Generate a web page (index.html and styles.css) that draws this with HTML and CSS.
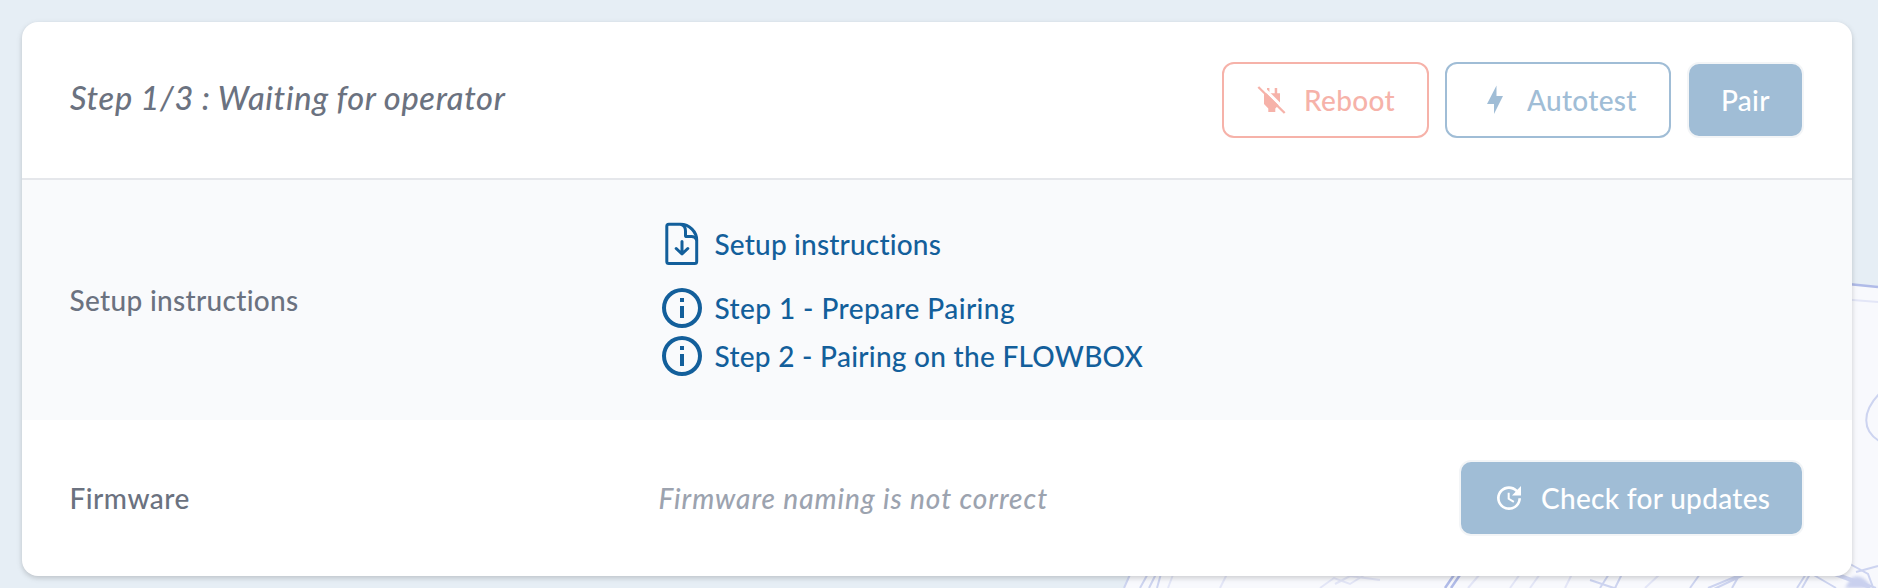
FILE: index.html
```html
<!DOCTYPE html>
<html lang="en">
<head>
<meta charset="utf-8">
<title>Device setup</title>
<link rel="stylesheet" href="styles.css">
</head>
<body>
<svg class="backdrop" width="1878" height="588" viewBox="0 0 1878 588" aria-hidden="true">
  <path class="paper" d="M1124 588 L1136 560 H1838 V283 L1878 286 V588Z"/>
  <g class="sketch">
    <path class="strong" d="M1838 283 L1878 287"/>
    <path d="M1840 299 L1878 302"/>
    <path class="mid" d="M1879 394 C1862 412 1862 430 1879 441"/>
    <path class="mid" d="M1124 588 L1132 570 M1149 588 L1158 570 M1140 588 L1150 570 M1157 588 L1162 570"/>
    <path d="M1168 588 L1174 572 M1220 588 L1228 572 M1320 588 L1334 578 L1350 584 L1366 574 M1335 584 L1350 576 L1380 580"/>
    <path class="strong" d="M1451 588 L1462 572 M1445 588 L1456 572"/>
    <path d="M1468 588 L1480 574 M1510 588 L1520 574 M1530 588 L1540 574 M1565 588 L1572 574 M1645 588 L1660 574"/>
    <path class="mid" d="M1600 588 L1609 574 M1615 588 L1622 574 M1590 580 L1620 590 M1690 588 L1700 574 M1708 588 L1742 574 M1712 590 L1750 572 M1732 588 L1740 574"/>
    <path class="mid" d="M1797 588 L1806 574 M1802 588 L1810 574 M1812 574 L1836 588 M1832 574 L1870 588 M1838 574 L1876 588 M1850 564 L1868 574 L1874 590 M1856 572 L1878 566"/>
  </g>
  <path class="smudge" d="M1845 588 L1851 578 Q1862 572 1872 588Z"/>
</svg>
<main class="card">
  <header class="card-header">
    <h1 class="title">Step 1/3 : Waiting for operator</h1>
    <div class="actions">
      <button class="btn outline danger">
        <svg width="32" height="32" viewBox="0 0 32 32"><path d="M11 4h2.400v5.300h5.300V4h2.500v5.300H24V20l-4.700 4.500V28h-7v-3.500L8 20V9.300h3z" fill="currentColor"/><path d="M4 .7L31 27.500" stroke="#fff" stroke-width="3"/><path d="M2.300 3L28.700 29" stroke="currentColor" stroke-width="2.300"/></svg>
        <span>Reboot</span>
      </button>
      <button class="btn outline primary">
        <svg width="32" height="32" viewBox="0 0 32 32"><path d="M17.500 1.500V12H24L15 30V20H8z" fill="currentColor"/></svg>
        <span>Autotest</span>
      </button>
      <button class="btn solid"><span>Pair</span></button>
    </div>
  </header>
  <section class="row shaded">
    <div class="label">Setup instructions</div>
    <div class="links">
      <a class="link file"><svg width="48" height="48" viewBox="0 0 48 48" fill="none" stroke="currentColor" stroke-width="3" stroke-linecap="round" stroke-linejoin="round"><path d="M10.800 4.200H22.500C31.500 4.200 38.700 12 38.700 20V41.500a2 2 0 0 1-2 2H10.800a2 2 0 0 1-2-2V6.200a2 2 0 0 1 2-2z"/><path d="M23.500 4.500Q27.500 6 27.500 11V15.500Q27.500 16.600 28.700 16.600H33.500Q37 16.600 38.500 19.500M24 21.500V33.500M18.200 28.500L24 34L29.800 28.500"/></svg><span>Setup instructions</span></a>
      <a class="link step-one"><svg width="48" height="48" viewBox="0 0 24 24"><path d="M11 9h2V7h-2m1 13c-4.410 0-8-3.590-8-8s3.590-8 8-8 8 3.590 8 8-3.590 8-8 8m0-18A10 10 0 0 0 2 12a10 10 0 0 0 10 10 10 10 0 0 0 10-10A10 10 0 0 0 12 2m-1 15h2v-6h-2v6z" fill="currentColor"/></svg><span>Step 1 - Prepare Pairing</span></a>
      <a class="link step-two"><svg width="48" height="48" viewBox="0 0 24 24"><path d="M11 9h2V7h-2m1 13c-4.410 0-8-3.590-8-8s3.590-8 8-8 8 3.590 8 8-3.590 8-8 8m0-18A10 10 0 0 0 2 12a10 10 0 0 0 10 10 10 10 0 0 0 10-10A10 10 0 0 0 12 2m-1 15h2v-6h-2v6z" fill="currentColor"/></svg><span>Step 2 - Pairing on the FLOWBOX</span></a>
    </div>
  </section>
  <section class="row firmware">
    <div class="label">Firmware</div>
    <div class="notice">Firmware naming is not correct</div>
    <button class="btn solid">
      <svg width="32" height="32" viewBox="0 0 24 24"><path d="M21,10.120H14.220L16.960,7.300C14.230,4.600 9.810,4.500 7.080,7.200C4.350,9.910 4.350,14.280 7.080,17C9.810,19.700 14.230,19.700 16.960,17C18.320,15.650 19,14.080 19,12.100H21C21,14.080 20.120,16.650 18.360,18.390C14.850,21.870 9.150,21.870 5.640,18.390C2.140,14.920 2.110,9.280 5.620,5.810C9.130,2.340 14.760,2.340 18.270,5.810L21,3V10.120M12.500,8V12.250L16,14.330L15.280,15.540L11,13V8H12.500Z" fill="currentColor"/></svg>
      <span>Check for updates</span>
    </button>
  </section>
</main>
</body>
</html>
```
FILE: styles.css
```css
* { box-sizing: border-box; }
body {
  margin: 0;
  height: 588px;
  padding: 22px 26px 0 22px;
  overflow: hidden;
  background: #e6eef5;
  font: 500 28px/40px Lato, "Open Sans", sans-serif;
  font-variant-ligatures: none;
  color: #6b7280;
}
.backdrop { position: absolute; left: 0; top: 0; }
.paper { fill: #f8f9fd; }
.sketch { fill: none; stroke: #e3e6f7; stroke-width: 2; filter: blur(.7px); }
.sketch .mid { stroke: #cdd4f0; }
.sketch .strong { stroke: #b0bbe8; stroke-width: 2.5; }
.smudge { fill: #c9d0ee; filter: blur(1.5px); }
.card {
  position: relative;
  height: 554px;
  border-radius: 16px;
  overflow: hidden;
  background: #fff;
  box-shadow: 0 2px 6px rgba(0, 0, 0, .12), 0 2px 4px rgba(0, 0, 0, .07);
}
.card-header {
  display: flex;
  justify-content: space-between;
  align-items: center;
  height: 158px;
  padding: 0 48px;
  border-bottom: 2px solid #e5e7eb;
}
.title {
  margin: 0;
  padding-bottom: 4px;
  font-size: 32.5px;
  font-weight: 500;
  font-style: italic;
  letter-spacing: .7px;
  word-spacing: -.5px;
}
.actions { display: flex; gap: 16px; }
.btn {
  display: flex;
  align-items: center;
  flex: none;
  gap: 16px;
  height: 76px;
  padding: 0 32px;
  border: 2px solid;
  border-radius: 12px;
  background: #fff;
  font: inherit;
  letter-spacing: .3px;
  white-space: nowrap;
}
.danger { width: 207px; color: #f6b2a9; }
.primary { width: 226px; color: #a0bdd6; }
.solid { border-color: #f3f5f7; background: #a0bdd6; color: #fff; }
.actions .solid { width: 117px; }
.firmware .solid { width: 345px; }
span { display: block; white-space: nowrap; }
svg { flex: none; display: block; }
.row {
  display: grid;
  grid-template-columns: 588px 1fr auto;
  align-items: center;
  padding: 0 48px 0 47.5px;
}
.shaded { height: 240px; background: #f9fafc; }
.firmware { height: 156px; }
.label { letter-spacing: .32px; }
.firmware .label { letter-spacing: .5px; }
.links { display: flex; flex-direction: column; color: #135f9b; }
.link { display: flex; align-items: center; gap: 9px; height: 48px; letter-spacing: .18px; }
.file { margin-bottom: 16px; }
.step-one { letter-spacing: .42px; }
.step-two { letter-spacing: .28px; }
.notice { padding-left: 1px; color: #9ca3af; font-style: italic; letter-spacing: .95px; }
```
